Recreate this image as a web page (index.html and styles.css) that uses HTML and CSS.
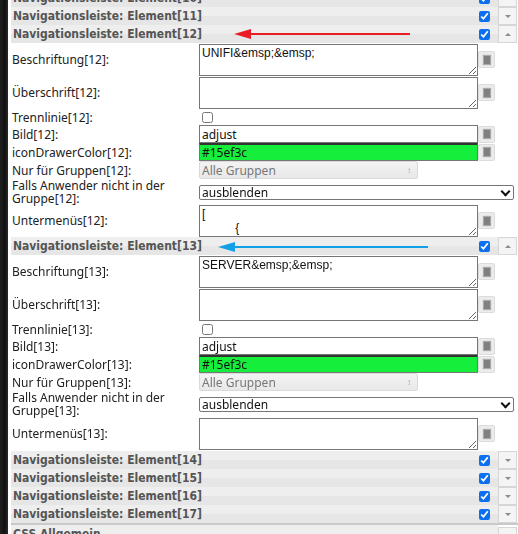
FILE: index.html
```html
<!DOCTYPE html>
<html lang="de">
<head>
  <meta charset="UTF-8">
  <title>Navigationsleiste</title>
  <link rel="stylesheet" href="styles.css">
</head>
<body>
  <div class="page">
    <div class="strip"></div>
    <div class="panel">

      <div class="head">
        <div class="head-bar"><span class="head-title">Navigationsleiste: Element[10]</span><input type="checkbox" checked></div>
        <div class="head-btn"><span class="tri-down"></span></div>
      </div>
      <div class="head">
        <div class="head-bar"><span class="head-title">Navigationsleiste: Element[11]</span><input type="checkbox" checked></div>
        <div class="head-btn"><span class="tri-down"></span></div>
      </div>

      <div class="head marked">
        <div class="head-bar"><span class="head-title">Navigationsleiste: Element[12]</span><input type="checkbox" checked></div>
        <div class="head-btn"><span class="tri-up"></span></div>
        <div class="arrow red"></div>
      </div>
      <div class="fields">
        <div class="field tall">
          <label>Beschriftung[12]:</label>
          <div class="ctrl"><textarea>UNIFI&amp;emsp;&amp;emsp;</textarea><span class="side-btn"><i></i></span></div>
        </div>
        <div class="field tall">
          <label>Überschrift[12]:</label>
          <div class="ctrl"><textarea></textarea><span class="side-btn"><i></i></span></div>
        </div>
        <div class="field check">
          <label>Trennlinie[12]:</label>
          <div class="ctrl"><input type="checkbox" class="plain"></div>
        </div>
        <div class="field line">
          <label>Bild[12]:</label>
          <div class="ctrl"><input type="text" value="adjust"><span class="side-btn"><i></i></span></div>
        </div>
        <div class="field line">
          <label>iconDrawerColor[12]:</label>
          <div class="ctrl"><input type="text" class="green" value="#15ef3c"><span class="side-btn"><i></i></span></div>
        </div>
        <div class="field group">
          <label>Nur für Gruppen[12]:</label>
          <div class="ctrl"><span class="select-wrap"><select disabled><option>Alle Gruppen</option></select></span></div>
        </div>
        <div class="field double">
          <label>Falls Anwender nicht in der Gruppe[12]:</label>
          <div class="ctrl"><span class="chevron-wrap"><select class="wide"><option>ausblenden</option></select></span></div>
        </div>
        <div class="field tall">
          <label>Untermenüs[12]:</label>
          <div class="ctrl"><textarea class="scroll">[
          {
              "name": "UniFi"
          }
]</textarea><span class="side-btn"><i></i></span></div>
        </div>
      </div>

      <div class="head marked">
        <div class="head-bar"><span class="head-title">Navigationsleiste: Element[13]</span><input type="checkbox" checked></div>
        <div class="head-btn"><span class="tri-up"></span></div>
        <div class="arrow blue"></div>
      </div>
      <div class="fields">
        <div class="field tall">
          <label>Beschriftung[13]:</label>
          <div class="ctrl"><textarea>SERVER&amp;emsp;&amp;emsp;</textarea><span class="side-btn"><i></i></span></div>
        </div>
        <div class="field tall">
          <label>Überschrift[13]:</label>
          <div class="ctrl"><textarea></textarea><span class="side-btn"><i></i></span></div>
        </div>
        <div class="field check">
          <label>Trennlinie[13]:</label>
          <div class="ctrl"><input type="checkbox" class="plain"></div>
        </div>
        <div class="field line">
          <label>Bild[13]:</label>
          <div class="ctrl"><input type="text" value="adjust"><span class="side-btn"><i></i></span></div>
        </div>
        <div class="field line">
          <label>iconDrawerColor[13]:</label>
          <div class="ctrl"><input type="text" class="green" value="#15ef3c"><span class="side-btn"><i></i></span></div>
        </div>
        <div class="field group">
          <label>Nur für Gruppen[13]:</label>
          <div class="ctrl"><span class="select-wrap"><select disabled><option>Alle Gruppen</option></select></span></div>
        </div>
        <div class="field double">
          <label>Falls Anwender nicht in der Gruppe[13]:</label>
          <div class="ctrl"><span class="chevron-wrap"><select class="wide"><option>ausblenden</option></select></span></div>
        </div>
        <div class="field tall last">
          <label>Untermenüs[13]:</label>
          <div class="ctrl"><textarea></textarea><span class="side-btn"><i></i></span></div>
        </div>
      </div>

      <div class="head">
        <div class="head-bar"><span class="head-title">Navigationsleiste: Element[14]</span><input type="checkbox" checked></div>
        <div class="head-btn"><span class="tri-down"></span></div>
      </div>
      <div class="head">
        <div class="head-bar"><span class="head-title">Navigationsleiste: Element[15]</span><input type="checkbox" checked></div>
        <div class="head-btn"><span class="tri-down"></span></div>
      </div>
      <div class="head">
        <div class="head-bar"><span class="head-title">Navigationsleiste: Element[16]</span><input type="checkbox" checked></div>
        <div class="head-btn"><span class="tri-down"></span></div>
      </div>
      <div class="head">
        <div class="head-bar"><span class="head-title">Navigationsleiste: Element[17]</span><input type="checkbox" checked></div>
        <div class="head-btn"><span class="tri-down"></span></div>
      </div>

      <div class="group-head">
        <div class="head-bar"><span class="head-title">CSS Allgemein</span></div>
        <div class="head-btn"><span class="tri-down"></span></div>
      </div>

    </div>
  </div>
</body>
</html>
```

FILE: styles.css
```css
html, body {
  margin: 0;
  padding: 0;
  height: 100%;
  overflow: hidden;
}
body {
  font-family: 'Noto Sans', 'Open Sans', sans-serif;
  font-size: 12px;
  color: #222;
  background: #fff;
}
.page {
  display: flex;
  min-height: 100%;
}
.strip {
  width: 8px;
  flex: none;
  background: linear-gradient(90deg, #202020, #111 60%, #2a2a2a);
}
.panel {
  flex: 1;
  margin-top: -11px;
}

/* section headers */
.head,
.group-head {
  position: relative;
  display: flex;
  height: 18px;
}
.head-bar {
  flex: 1;
  display: flex;
  align-items: center;
  margin-left: 3px;
  padding: 0 8px 0 2px;
  background: linear-gradient(#eeeeee 50%, #e6e6e6 50%);
}
.head-title {
  flex: 1;
  font-family: 'DejaVu Sans Condensed', 'DejaVu Sans', Verdana, sans-serif;
  font-stretch: condensed;
  font-weight: bold;
  font-size: 12px;
  color: #555;
}
.head-bar input {
  width: 11px;
  height: 11px;
  margin: 0;
  accent-color: #0b6ff0;
}
.head-btn {
  width: 17px;
  height: 16px;
  margin-right: 1px;
  border: 1px solid #d6d6d6;
  background: #f4f4f4;
  display: flex;
  align-items: center;
  justify-content: center;
}
.tri-down {
  border-left: 3px solid transparent;
  border-right: 3px solid transparent;
  border-top: 3px solid #8a8a8a;
}
.tri-up {
  border-left: 3px solid transparent;
  border-right: 3px solid transparent;
  border-bottom: 3px solid #8a8a8a;
}
.group-head {
  margin-left: 3px;
  border-top: 2px solid #c9c9c9;
}
.group-head .head-bar {
  margin-left: 0;
}
.group-head .head-btn {
  margin-top: 2px;
}

/* arrows drawn on the screenshot */
.arrow {
  position: absolute;
  height: 2px;
}
.arrow::before {
  content: "";
  position: absolute;
  left: -16px;
  top: -4px;
  border-top: 5px solid transparent;
  border-bottom: 5px solid transparent;
  border-right: 17px solid currentColor;
}
.arrow.red {
  left: 242px;
  width: 160px;
  top: 8px;
  color: #ea1d27;
  background: #ea1d27;
}
.arrow.blue {
  left: 226px;
  width: 194px;
  top: 9px;
  color: #14a0e6;
  background: #14a0e6;
}

/* form rows */
.field {
  display: grid;
  grid-template-columns: 191px 1fr;
  align-items: center;
}
.field label {
  padding-left: 4px;
  line-height: 13px;
}
.ctrl {
  display: flex;
  align-items: center;
}
.field.tall {
  height: 33px;
}
.field.check {
  height: 16px;
}
.field.line {
  height: 18px;
}
.field.group {
  height: 18px;
}
.field.double {
  height: 25px;
}
.field.double label {
  padding-right: 30px;
}
.field.last {
  height: 35px;
}
textarea {
  box-sizing: border-box;
  width: 279px;
  height: 32px;
  margin: 0;
  padding: 1px 2px 0;
  border: 1px solid #767676;
  font-family: 'Liberation Sans', Arial, sans-serif;
  font-size: 12px;
  color: #111;
}
textarea.scroll::-webkit-scrollbar {
  width: 3px;
}
textarea.scroll::-webkit-scrollbar-thumb {
  background: #666;
  height: 3px;
}
input[type="text"] {
  box-sizing: border-box;
  width: 279px;
  height: 18px;
  margin: 0;
  padding: 0 2px;
  border: 1px solid #767676;
  font-family: 'Noto Sans', sans-serif;
  font-size: 12px;
  color: #111;
}
input.green {
  background: #15ef3c;
  border-top: 2px solid #333;
}
.plain {
  width: 11px;
  height: 11px;
  margin: 0 0 0 3px;
}
.side-btn {
  box-sizing: border-box;
  width: 17px;
  height: 17px;
  border: 1px solid #dcdcdc;
  border-radius: 2px;
  background: #ececec;
  display: flex;
  align-items: center;
  justify-content: center;
}
.side-btn i {
  width: 6px;
  height: 8px;
  background: #808080;
  box-shadow: 0 0 1px 1px #aaa;
}
.select-wrap,
.chevron-wrap {
  position: relative;
  display: inline-block;
}
.select-wrap::after {
  content: "\2195";
  position: absolute;
  right: 7px;
  top: 3px;
  font-size: 8px;
  color: #aaa;
}
.select-wrap select {
  appearance: none;
  box-sizing: border-box;
  width: 219px;
  height: 18px;
  margin: 0;
  padding: 0 2px;
  border: 1px solid #dadada;
  border-radius: 2px;
  background: linear-gradient(#f3f3f3, #e8e8e8);
  font-family: 'Noto Sans', sans-serif;
  font-size: 12px;
  color: #777;
  opacity: 1;
}
.chevron-wrap::after {
  content: "";
  position: absolute;
  right: 5px;
  top: 3px;
  width: 5px;
  height: 5px;
  border-right: 2px solid #111;
  border-bottom: 2px solid #111;
  transform: rotate(45deg);
}
select.wide {
  appearance: none;
  box-sizing: border-box;
  display: block;
  width: 315px;
  height: 15px;
  margin: 0;
  padding: 0 2px;
  border: 1px solid #767676;
  border-radius: 2px;
  background: #fff;
  font-family: 'Noto Sans', sans-serif;
  font-size: 12px;
  line-height: 13px;
  color: #111;
}
```
